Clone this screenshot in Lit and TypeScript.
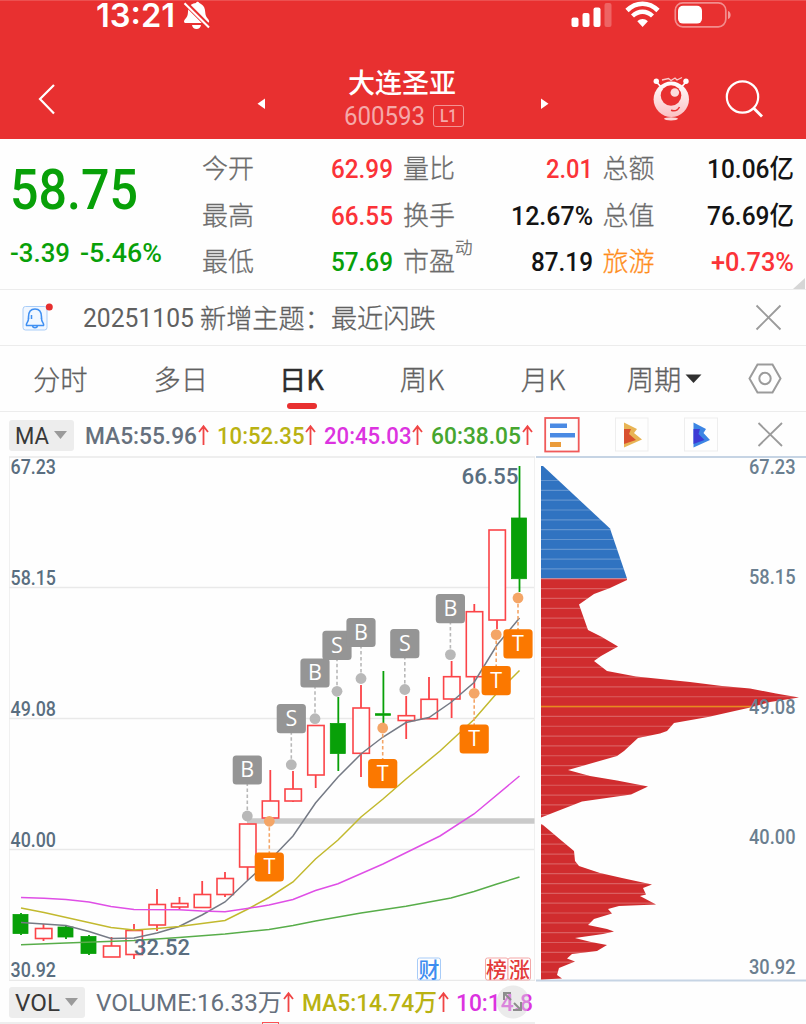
import { LitElement, html, svg, css } from "lit";
import { customElement } from "lit/decorators.js";

const FONT = `Roboto, "Noto Sans CJK SC", sans-serif`;

/* One run of figures set to an exact width; its box is exactly as tall as its capitals. */
const num = (text: string, width: number, size: number, color: string, weight = 500, family = FONT) => {
  const cap = Math.round(size * 0.711 * 10) / 10;
  return html`<svg class="num" width=${width} height=${cap}>
    <text x="0" y=${cap} font-family=${family} font-size=${size} font-weight=${weight} fill=${color}
      textLength=${width} lengthAdjust="spacingAndGlyphs">${text}</text>
  </svg>`;
};

const RED = "#fb3338";
const GREEN = "#08a008";
const BLACK = "#141414";
const SLATE = "#5a6e80";

const quotes: [string, string, number, string, string?][][] = [
  [["今开", "62.99", 62, RED], ["量比", "2.01", 47, RED], ["总额", "10.06亿", 87, BLACK]],
  [["最高", "66.55", 62, RED], ["换手", "12.67%", 82, BLACK], ["总值", "76.69亿", 87, BLACK]],
  [["最低", "57.69", 62, GREEN], ["市盈", "87.19", 62, BLACK, "动"], ["旅游", "+0.73%", 83, RED]],
];

/* centre x, high, body top, body bottom, low, rising */
const candles: [number, number, number, number, number, boolean][] = [
  [21, 913, 914.5, 933.5, 935, false], [43.5, 924, 928.5, 938.5, 941, true],
  [66, 925, 927, 937, 939, false], [89, 935, 936.5, 953.5, 955, false],
  [111.5, 937, 946, 957, 957, true], [134, 924, 930.5, 954.5, 959, true],
  [157, 889, 904.5, 925, 931, true], [179.5, 897, 903.5, 907, 910, true],
  [202.2, 881, 894.5, 907.5, 908, true], [225, 872, 878.5, 894.5, 897, true],
  [247.6, 824, 824, 867, 880, true], [270.3, 770, 801, 818, 818, true],
  [293, 771, 789, 801, 802, true], [315.7, 725.5, 725.5, 775, 788, true],
  [338.3, 697, 723.5, 753.5, 771, false], [361, 685, 708, 753.3, 777, true],
  [383.4, 671, 713.7, 715.3, 723, false], [406.2, 696, 715.7, 720.5, 739, true],
  [429, 677, 699.3, 718.7, 719, true], [451.6, 661, 676.7, 699, 718, true],
  [474.3, 604, 611.7, 676.7, 688, true], [497, 530, 530, 620, 629, true],
  [519.5, 466, 518, 578.7, 592, false],
];

const averages: [string, string][] = [
  ["#757a85", "21,922.5 66,925.5 89,931.5 111,938.5 134,938 157,933 179,926.5 202,915 225,902 247,881 270,860 293,836 315.5,803 338,777 361.5,753.5 383,737 406,722.5 429,717.5 451.5,702 474,682.5 497,645 519.5,618"],
  ["#c2b92e", "21,908 44,912.5 111,927.5 134,930 157,928.5 179,926.5 225,920.5 247,909.5 269,897.5 293,882 315.5,859 338,840 361,817 383,799 406,779 440,751 474,719.5 497,693 519.5,670.5"],
  ["#df4fe6", "21,897.5 44,898.2 66,899.5 89,902 111,906.5 134,909.5 179,909.7 202,911 225,911.7 247,908.5 269,905 293,899.5 315.5,890.5 338,883.7 383,864 440,836 474,814 519.5,776"],
  ["#58ad4a", "21,944.8 66,943 134,940.5 179,937.5 225,934 269,929.5 293,925.5 315.5,921 361,913 406,906.3 451,898 474,891.5 497,884 519.5,877"],
];

/* letter, x, badge y, dot y */
const marks: [string, number, number, number][] = [
  ["B", 247.3, 770, 816], ["S", 291.3, 718.7, 764.7], ["B", 315, 673, 718.7], ["S", 337, 645.3, 691.3],
  ["B", 361, 632.5, 678.5], ["S", 404.8, 643.7, 689.5], ["B", 450.4, 608.7, 654.6],
  ["T", 269.3, 867, 821.3], ["T", 382.7, 773.6, 728], ["T", 474.2, 739, 693.3],
  ["T", 496.2, 680.6, 634.6], ["T", 518, 643.8, 598],
];

const axis: [string, number, number][] = [
  ["67.23", 473.5, 473.5], ["58.15", 585, 583.5], ["49.08", 716, 713.5], ["40.00", 847, 843.5], ["30.92", 977, 973.5],
];

const chipUpper = "541,466 543,466 610,528.5 627,578.5 541,578.5";
const chipLower =
  "541,578.5 627,578.5 627,580 610,588 594,594 579,604.5 588,630 601,636.5 618,646.5 601,656 594,661 607,671 636,676.5 690,682 722,686 750,688.5 776,693.5 799,697.5 770,702 748,708 708,717 674,723 667,731 660,733.5 638,738 624,751 617,756 568,770 590,776 617,780.5 648,786.5 631,794.5 582,801.5 541,817.5";
const chipBase =
  "541,824 543,825 559,838.5 574,851 575,861 579,866 600,873 622,878 652,884.5 643,888 646,894.5 640,896 656,904.5 619,906 608,909 612,913.5 594,919 588,925 607,929 614,931.5 603,934 575,938 591,942 607,945 597,951 572,954 567,958.5 575,961.5 559,968 557,975 562,978.5 541,979.5";

@customElement("app-root")
export class AppRoot extends LitElement {
  static styles = css`
    :host { display: block; width: 806px; height: 1024px; overflow: hidden; background: #fefefe; font-family: Roboto, "Noto Sans CJK SC", sans-serif; }
    * { box-sizing: border-box; }
    svg { display: block; flex: none; overflow: visible; }
    .header { height: 139px; background: #e83030; color: #fff; border-top: 1px solid #ec5050; }
    .status { height: 30px; display: flex; padding-left: 96px; }
    .status .clock { margin-top: 3px; width: 79px; }
    .status .mute { margin: 0 0 0 8px; }
    .status .radio { margin-left: 358px; }
    .nav { height: 108px; display: flex; }
    .nav .title { margin: 0 7px 0 70px; width: 124px; display: flex; flex-direction: column; align-items: center; }
    .name { font-size: 27px; line-height: 36px; font-weight: 500; margin-top: 35px; white-space: nowrap; }
    .code { display: flex; align-items: center; gap: 8px; margin-top: 2.5px; height: 22px; padding-left: 4px; }
    .level { width: 31px; height: 22px; border: 1.5px solid #f39393; border-radius: 3px; display: flex; align-items: center; justify-content: center; }
    .quote { height: 151px; display: flex; border-bottom: 1px solid #ececec; position: relative; }
    .last { width: 202px; padding: 31px 0 0 10px; }
    .change { display: flex; gap: 10px; margin-top: 34px; }
    .grid { display: grid; grid-template-columns: 191px 189.5px 191px; grid-template-rows: repeat(3, 46.5px); column-gap: 10px; margin-top: 6px; }
    .cell { display: flex; align-items: center; justify-content: space-between; }
    .label { font-size: 26px; line-height: 28px; color: #6b6b6b; font-weight: 300; -webkit-text-stroke: 0.3px currentColor; white-space: nowrap; position: relative; padding-top: 2px; }
    .label.hot { color: #ff8d1c; }
    .sup { position: absolute; left: 52px; top: -10px; font-size: 17.5px; line-height: 24px; }
    .corner { position: absolute; right: 1px; bottom: 0; }
    .notice { height: 56px; display: flex; align-items: center; padding: 0 25px 0 22px; border-bottom: 1px solid #ececec; color: #606060; }
    .notice .date { margin: 0 6px 0 30px; }
    .notice .words { font-size: 26.2px; font-weight: 300; -webkit-text-stroke: 0.3px currentColor; line-height: 30px; flex: 1; white-space: nowrap; padding-top: 2px; }
    .tabs { height: 66px; display: grid; grid-template-columns: 120.5px 120.5px 121px 120px 122px 121px 79px; border-bottom: 1px solid #ececec; }
    .tab { display: flex; align-items: center; justify-content: center; position: relative; font-family: "Noto Sans CJK SC", sans-serif; font-size: 27.3px; font-weight: 300; -webkit-text-stroke: 0.3px currentColor; color: #606060; white-space: nowrap; gap: 4px; padding-bottom: 2px; }
    .tab.on { color: #2c2c2c; font-weight: 400; -webkit-text-stroke: 0.4px currentColor; }
    .tab svg { margin-top: 2px; }
    .bar { position: absolute; left: 46px; bottom: 2px; width: 30px; height: 6px; border-radius: 3px; background: #e83030; }
    .tools { height: 45px; display: flex; align-items: center; padding: 1px 0 0 9px; }
    .pick { height: 31px; background: #ededed; border-radius: 3px; display: flex; align-items: center; padding-left: 6px; gap: 5px; flex: none; }
    .pick.ma { width: 65px; margin-right: 11px; }
    .pick.vol { width: 76px; margin-right: 11px; }
    .ind { display: flex; align-items: center; gap: 1px; margin-right: 7.5px; flex: none; }
    .icons { display: flex; align-items: center; margin-left: 4px; flex: none; }
    .charts { display: flex; height: 525px; }
    .volume { height: 40px; display: flex; align-items: center; padding-left: 9px; width: 535px; position: relative; }
    .expand { position: absolute; left: 497px; top: 4px; }
    .foot { width: 535px; height: 3px; background: #eeeeee; padding-left: 262px; }
    .sprout { width: 17px; height: 3px; border: 1px solid #fb5055; border-bottom: 0; }
  `;

  private arrow() {
    return html`<svg width="11" height="20" fill="none" stroke="#f04545" stroke-width="1.8"><path d="M5.5 20V1.5M1 7L5.5 1.2L10 7" /></svg>`;
  }

  private cross(size: number) {
    return html`<svg width=${size} height=${size} viewBox="0 0 24 24" fill="none" stroke="#9b9b9b" stroke-width="1.8"><path d="M.5 .5L23.5 23.5M23.5 .5L.5 23.5" /></svg>`;
  }

  private indicator(text: string, width: number, color: string) {
    return html`<div class="ind">${num(text, width, 23.3, color)}${this.arrow()}</div>`;
  }

  private header() {
    return html`<div class="header">
      <div class="status">
        <div class="clock">${num("13:21", 79, 32, "#fff", 600, "Inter")}</div>
        <svg class="mute" width="27" height="30" viewBox="183 1 27 30" >
          <path fill="#fff" d="M196 3c.4-1 1-1.4 1.8-1.2C199 2 199 3.2 201 4c3 1.5 4 4.5 4.200 8 .2 3.500 1 4.800 2.800 7 1.800 2.200 1.500 4-1 4H186c-2.400 0-2.500-2-.8-4 2-2.400 2.600-3.500 2.800-7 .2-5 2.500-7.300 5.500-8.400Z" />
          <path fill="#fff" d="M192 25h9c-.5 2.500-2 4-4.500 4s-4-1.500-4.500-4Z" />
          <path d="M184 1.800L210 27.800" stroke="#e83030" stroke-width="5" />
          <path d="M184.500 3.200L209 27.500" stroke="#fff" stroke-width="2.100" />
        </svg>
        <svg class="radio" width="164" height="30" viewBox="568 1 164 30">
          <g fill="#fff"><rect x="571.500" y="17.500" width="7" height="9.500" rx="2" /><rect x="582.500" y="13" width="7" height="14" rx="2" /><rect x="593.500" y="7.500" width="7" height="19.500" rx="2" /><rect x="604.500" y="3" width="7" height="24" rx="2" opacity=".25" /></g>
          <g fill="none" stroke="#fff"><path d="M627 10.500C636 1.500 649 1.500 658 10.500" stroke-width="4.600" /><path d="M632.500 16C638.500 10.300 646.500 10.300 652.500 16" stroke-width="4.400" /></g>
          <path fill="#fff" d="M637.300 21.300C640.500 18.300 644.700 18.300 647.900 21.300L642.600 27Z" />
          <rect x="675.300" y="2.800" width="50.500" height="24" rx="7.500" fill="none" stroke="#fff" stroke-width="1.700" opacity=".45" />
          <rect x="678" y="5.800" width="24" height="17.800" rx="5" fill="#fff" />
          <path d="M728 11c3.500 1 3.500 7 0 8Z" fill="#fff" opacity=".5" />
        </svg>
      </div>
      <div class="nav">
        <svg width="270" height="108" viewBox="0 31 270 108">
          <path d="M54 85L40 99L54 113.500" fill="none" stroke="#fff" stroke-width="2.200" />
          <path d="M265 98.500V109L257.500 103.800Z" fill="#fff" />
        </svg>
        <div class="title">
          <div class="name">大连圣亚</div>
          <div class="code">${num("600593", 81, 25, "#f5a9a9", 400)}<div class="level">${num("L1", 17, 18, "#f5a9a9", 500)}</div></div>
        </div>
        <svg width="335" height="108" viewBox="471 31 335 108">
          <defs><linearGradient id="face" x1="0" y1="0" x2="0" y2="1"><stop offset="0" stop-color="#fff" /><stop offset="1" stop-color="#fbc0c2" /></linearGradient></defs>
          <path d="M541 98.500V109L548.500 103.800Z" fill="#fff" />
          <g stroke="#fff" fill="none"><path d="M656.500 82L662 88M686 82L680.500 88" stroke-width="1.800" /><path d="M662 80L668.500 78.500L671 80.500L675 78L677 80L682 77.500" stroke-width="1.300" opacity=".75" /></g>
          <circle cx="656.300" cy="81.300" r="2.700" fill="#fff" /><circle cx="686" cy="81.300" r="2.700" fill="#fff" />
          <circle cx="671.300" cy="99.300" r="17.700" fill="url(#face)" />
          <circle cx="671" cy="95.500" r="10.300" fill="#e83030" />
          <circle cx="674.800" cy="92.500" r="4.300" fill="#fcdcdc" />
          <path d="M671 110.300C675 111.500 678 110 679.500 107" fill="none" stroke="#e83030" stroke-width="1.500" />
          <ellipse cx="671" cy="118.800" rx="7" ry="1.600" fill="#fbd5d5" />
          <circle cx="742.500" cy="97" r="15.700" fill="none" stroke="#fff" stroke-width="2.200" />
          <path d="M753.500 108L762 116.500" stroke="#fff" stroke-width="2.800" />
        </svg>
      </div>
    </div>`;
  }

  private candle([x, high, top, bottom, low, rising]: (typeof candles)[number]) {
    const color = rising ? "#fb4448" : GREEN;
    return svg`<g stroke=${color} stroke-width="1.800">
      <path d=${`M${x} ${high}V${top}M${x} ${bottom}V${low}`} />
      <rect x=${x - 8} y=${top} width=${rising ? 16.4 : 15} height=${bottom - top} fill=${rising ? "#fefefe" : color} stroke-width=${rising ? 1.6 : 0.8} />
    </g>`;
  }

  private mark([letter, x, y, dot]: (typeof marks)[number]) {
    const t = letter === "T";
    const tint = t ? "#f4a566" : "#b8b8b8";
    return svg`<path d=${`M${x} ${dot}V${y}`} stroke=${tint} stroke-width="1.600" stroke-dasharray="3.500 2.500" />
      <circle cx=${x} cy=${dot} r="5.400" fill=${tint} />
      <rect x=${x - 14.6} y=${y - 14.6} width="29.200" height="29.200" rx="3.500" fill=${t ? "#fb7800" : "#959595"} />
      <text x=${x} y=${y + 7.3} text-anchor="middle" font-family="Open Sans" font-size="21.500" fill="#fff">${letter}</text>`;
  }

  private priceChart() {
    return html`<svg width="535" height="525" viewBox="0 457 535 525">
      <path d="M9.500 980.500V457M534.500 457V980.500" stroke="#f0f0f0" fill="none" />
      <path d="M9 457H535M9 587.500H534M9 718.500H534M9 849.500H534M9 980.300H535" stroke="#e9e9e9" stroke-width="1.300" />
      <path d="M247 821H534.500" stroke="#cacaca" stroke-width="5.500" />
      ${candles.map((c) => this.candle(c))}
      ${averages.map(([color, points]) => svg`<polyline points=${points} fill="none" stroke=${color} stroke-width="1.500" />`)}
      ${marks.map((m) => this.mark(m))}
      <g fill=${SLATE} font-family=${FONT} font-weight="500">
        ${axis.map(([v, y]) => svg`<text x="10.500" y=${y} font-size="19.300" textLength="45.500" lengthAdjust="spacingAndGlyphs">${v}</text>`)}
        <text x="461.500" y="484" font-size="22.500" textLength="57" lengthAdjust="spacingAndGlyphs">66.55</text>
        <text x="134" y="955" font-size="22.500" textLength="56" lengthAdjust="spacingAndGlyphs">32.52</text>
      </g>
      <g fill="#fefefe" font-size="21" font-family="Noto Sans CJK SC" text-anchor="middle">
        <rect x="417.500" y="958" width="23" height="22" rx="2" stroke="#a8ccf8" />
        <rect x="485.500" y="958" width="22.500" height="22" rx="2" stroke="#f4a8a8" />
        <rect x="508" y="958" width="22.500" height="22" rx="2" stroke="#f4a8a8" />
        <g font-weight="500"><text x="429" y="976.500" fill="#3d8df0">财</text><text x="496.500" y="976.500" fill="#e33a3a">榜</text><text x="519.500" y="976.500" fill="#e33a3a">涨</text></g>
      </g>
    </svg>`;
  }

  private chipChart() {
    const stripes = Array.from({ length: 51 }, (_, i) => 480.5 + i * 9.83);
    return html`<svg width="271" height="525" viewBox="535 457 271 525">
      <defs><clipPath id="chips"><polygon points=${chipUpper} /><polygon points=${chipLower} /><polygon points=${chipBase} /></clipPath></defs>
      <path d="M536 457H806M536 980.500H806" stroke="#c6d4e4" stroke-width="2" />
      <polygon points=${chipUpper} fill="#3073c1" />
      <polygon points=${chipLower} fill="#d02c2e" />
      <polygon points=${chipBase} fill="#d02c2e" />
      <g clip-path="url(#chips)">
        ${stripes.map((y) => svg`<path d=${`M541 ${y}H806`} stroke="#fff" stroke-opacity=".24" stroke-width="1.200" />`)}
        <path d="M541 706.500H752" stroke="#e88a1e" stroke-width="1.400" />
      </g>
      <g fill="#6b7f90" font-family=${FONT} font-weight="500">
        ${axis.map(([v, , y]) => svg`<text x="749" y=${y} font-size="19.600" textLength="46.500" lengthAdjust="spacingAndGlyphs">${v}</text>`)}
      </g>
    </svg>`;
  }

  render() {
    return html`
      ${this.header()}
      <div class="quote">
        <div class="last">
          ${num("58.75", 128, 55, GREEN)}
          <div class="change">${num("-3.39", 60, 26, GREEN)}${num("-5.46%", 82, 26, GREEN)}</div>
        </div>
        <div class="grid">
          ${quotes.flat().map(([label, value, width, color, sup]) => html`<div class="cell">
            <div class="label ${label === "旅游" ? "hot" : ""}">${label}${sup ? html`<span class="sup">${sup}</span>` : ""}</div>
            ${num(value, width, 26, color)}
          </div>`)}
        </div>
        <svg class="corner" width="12" height="11"><path d="M12 0V11H0Z" fill="#d6d6d6" /></svg>
      </div>
      <div class="notice">
        <svg width="31" height="30" viewBox="22 303 31 30">
          <rect x="23" y="306.500" width="24" height="23.500" rx="2.500" fill="#f1f7ff" stroke="#a9cdf8" />
          <path d="M26 325.500H44M28.500 319V317C28.500 312 31 309 35 309S41.500 312 41.500 317V319" fill="none" stroke="#3e8ff2" stroke-width="1.600" />
          <path d="M28.500 318.500C28.500 322 26.500 322 26.200 325.500M41.500 318.500C41.500 322 43.500 322 43.800 325.500M32.500 326C33 328.300 37 328.300 37.500 326M31.500 315V319" fill="none" stroke="#3e8ff2" stroke-width="1.500" />
          <circle cx="49.300" cy="307" r="3.500" fill="#e62f2f" />
        </svg>
        <div class="date">${num("20251105", 111, 26, "#606060", 400)}</div>
        <div class="words">新增主题：最近闪跌</div>
        ${this.cross(25)}
      </div>
      <div class="tabs">
        <div class="tab">分时</div>
        <div class="tab">多日</div>
        <div class="tab on">日K<div class="bar"></div></div>
        <div class="tab">周K</div>
        <div class="tab">月K</div>
        <div class="tab">周期<svg width="17" height="9"><path d="M.5 .5H16.500L8.500 9Z" fill="#303030" /></svg></div>
        <div class="tab">
          <svg width="34" height="31" viewBox="0 0 34 31" fill="none" stroke="#9b9b9b" stroke-width="2"><path d="M9.500 1.500H24.500L32.500 15.500L24.500 29.500H9.500L1.500 15.500Z" /><circle cx="17" cy="15.500" r="5.700" /></svg>
        </div>
      </div>
      <div class="tools">
        <div class="pick ma">${num("MA", 34, 23.5, "#383838", 400)}<svg width="13" height="8"><path d="M0 0H13L6.500 8Z" fill="#9a9a9a" /></svg></div>
        ${this.indicator("MA5:55.96", 112, "#66707d")}
        ${this.indicator("10:52.35", 87.5, "#b9b212")}
        ${this.indicator("20:45.03", 87.5, "#dc33e0")}
        ${this.indicator("60:38.05", 90, "#46a62f")}
        <div class="icons">
          <svg width="262" height="36" viewBox="544 419 262 36">
            <rect x="545.200" y="420" width="33.500" height="33.500" fill="#fefefe" stroke="#f05a5a" stroke-width="1.800" />
            <path d="M550 427.700H567M550 437.200H575" stroke="#4a8ae3" stroke-width="4.400" /><path d="M550 446.500H561" stroke="#eb9c3b" stroke-width="5" />
            <g fill="#fefefe" stroke="#eeeeee"><rect x="615.500" y="420" width="32.500" height="33" /><rect x="684.500" y="420" width="33" height="33" /></g>
            <path d="M624 424.500L637 431L634 435L642 441.500L624 449.500Z" fill="#e8b454" /><path d="M624 431H631L629 436L636 442L624 446Z" fill="#d9512f" />
            <path d="M693.500 424.500L706 431L703.500 435L710 442L693.500 449.500Z" fill="#3c85e4" /><path d="M693.500 431H700L698.500 436L704.500 442L693.500 446Z" fill="#3d3bd5" />
            <path d="M758.500 425L782 448M782 425L758.500 448" stroke="#9b9b9b" stroke-width="1.800" />
          </svg>
        </div>
      </div>
      <div class="charts">${this.priceChart()}${this.chipChart()}</div>
      <div class="volume">
        <div class="pick vol">${num("VOL", 45, 23.5, "#383838", 400)}<svg width="13" height="8"><path d="M0 0H13L6.500 8Z" fill="#9a9a9a" /></svg></div>
        <div class="ind">${num("VOLUME:16.33万", 186, 23.3, "#66707d", 400)}${this.arrow()}</div>
        <div class="ind">${num("MA5:14.74万", 135, 23.3, "#b9b212")}${this.arrow()}</div>
        ${num("10:14.8", 77, 23.3, "#dc33e0")}
        <svg class="expand" width="32" height="32">
          <circle cx="16" cy="16" r="16.500" fill="#d8d8d8" opacity=".5" />
          <path d="M7 14V7H14M8 8L14 14M17 17L24 24M24 16V24H16" fill="none" stroke="#8d8d8d" stroke-width="2" />
        </svg>
      </div>
      <div class="foot"><div class="sprout"></div></div>
    `;
  }
}
